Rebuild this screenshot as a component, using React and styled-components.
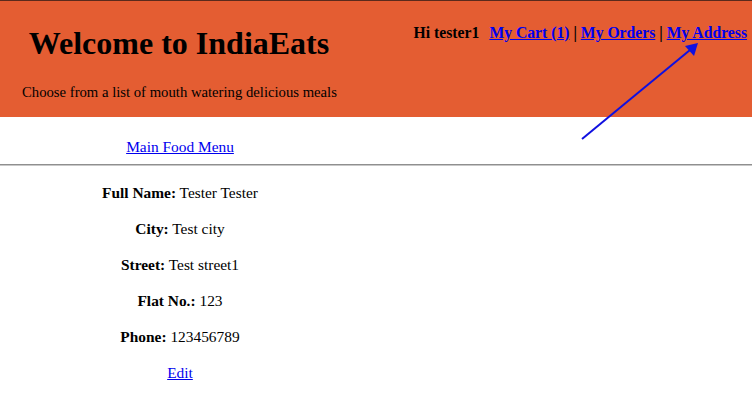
import React from "react";
import styled, { createGlobalStyle } from "styled-components";

const GlobalStyle = createGlobalStyle`
    body {
        margin: 0;
        background: #fff;
        font-family: "Liberation Serif", "Times New Roman", serif;
        color: #000;
    }
`;

const Page = styled.div`
    position: relative;
    width: 752px;
    height: 402px;
    overflow: hidden;
`;

const Header = styled.header`
    display: flex;
    height: 116px;
    background: #e45d32;
    border-top: 1px solid #5a2a1c;
`;

const Brand = styled.div`
    width: 358px;
    display: flex;
    flex-direction: column;
`;

const Title = styled.h1`
    margin: 22px 0 0 0;
    font-size: 32px;
    font-weight: bold;
    text-align: center;
    line-height: 40px;
`;

const Tagline = styled.p`
    margin: 20px 0 0 22px;
    font-size: 14.7px;
    line-height: 18px;
`;

const UserNav = styled.nav`
    flex: 1;
    padding: 22px 5px 0 0;
    text-align: right;
    font-size: 15.7px;
    font-weight: bold;
    line-height: 20px;
    white-space: nowrap;
`;

const Greeting = styled.span`
    margin-right: 10px;
`;

const Link = styled.a`
    color: #0000ee;
    text-decoration: underline;
`;

const MenuBar = styled.div`
    width: 360px;
    height: 47px;
    display: flex;
    align-items: flex-end;
    justify-content: center;
    font-size: 15.4px;
    line-height: 18px;
    box-sizing: border-box;
    padding-bottom: 8px;
`;

const Rule = styled.hr`
    margin: 0;
    border: none;
    border-top: 1px solid #8f8f8f;
    border-bottom: 1px solid #c8c8c8;
`;

const Details = styled.div`
    width: 360px;
    display: flex;
    flex-direction: column;
    align-items: center;
    gap: 18px;
    padding-top: 18px;
    font-size: 15.4px;
    line-height: 18px;
`;

const Field = styled.div``;

const Label = styled.b``;

const Arrow = styled.svg`
    position: absolute;
    left: 0;
    top: 0;
    pointer-events: none;
`;

const fields = [
    ["Full Name:", "Tester Tester"],
    ["City:", "Test city"],
    ["Street:", "Test street1"],
    ["Flat No.:", "123"],
    ["Phone:", "123456789"],
];

export default function App() {
    return (
        <Page>
            <GlobalStyle />
            <Header>
                <Brand>
                    <Title>Welcome to IndiaEats</Title>
                    <Tagline>Choose from a list of mouth watering delicious meals</Tagline>
                </Brand>
                <UserNav>
                    <Greeting>Hi tester1</Greeting>
                    <Link href="#">My Cart (1)</Link> | <Link href="#">My Orders</Link> |{" "}
                    <Link href="#">My Address</Link>
                </UserNav>
            </Header>
            <MenuBar>
                <Link href="#">Main Food Menu</Link>
            </MenuBar>
            <Rule />
            <Details>
                {fields.map(([label, value]) => (
                    <Field key={label}>
                        <Label>{label}</Label> {value}
                    </Field>
                ))}
                <Link href="#">Edit</Link>
            </Details>
            <Arrow width="752" height="402">
                <line x1="582" y1="139" x2="690" y2="50" stroke="#1010e0" strokeWidth="2" />
                <polygon points="698,43 685,46 694,56" fill="#1010e0" />
            </Arrow>
        </Page>
    );
}
